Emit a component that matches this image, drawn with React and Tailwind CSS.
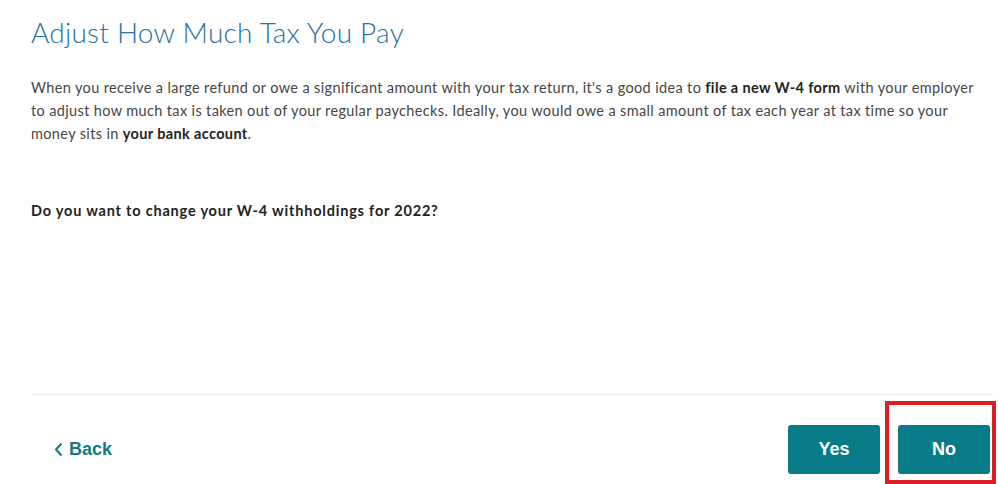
import React from "react";

function App() {
  return (
    <div className="w-[998px] h-[484px] bg-white overflow-hidden font-['Lato',sans-serif]">
      <div className="px-[31px] flex flex-col h-full">
        <h1 className="pt-[14px] text-[28px] leading-[36px] font-light text-[#2b70a6] tracking-[0.25px]">
          Adjust How Much Tax You Pay
        </h1>

        <p className="mt-[26px] text-[14.5px] leading-[23px] text-[#454545] tracking-[0.36px]">
          <span className="block whitespace-nowrap">
            When you receive a large refund or owe a significant amount with your tax return, it's a good idea to{" "}
            <b className="font-bold text-[#222]">file a new W-4 form</b> with your employer
          </span>
          <span className="block whitespace-nowrap">
            to adjust how much tax is taken out of your regular paychecks. Ideally, you would owe a small amount of tax each year at tax time so your
          </span>
          <span className="block whitespace-nowrap">
            money sits in <b className="font-bold text-[#222]">your bank account</b>.
          </span>
        </p>

        <p className="mt-[54px] text-[14.5px] leading-[23px] font-bold text-[#222] tracking-[0.8px]">
          Do you want to change your W-4 withholdings for 2022?
        </p>

        <div className="mt-auto border-t border-[#ececec] mr-[-24px]" />

        <div className="flex items-center justify-between h-[89px] pt-[20px] mr-[-23px]">
          <button className="flex items-center gap-[6px] pl-[23px] text-[18px] font-bold text-[#0f7b88] font-['Liberation_Sans',sans-serif]">
            <svg width="9" height="15" viewBox="0 0 9 15" fill="none">
              <path d="M7.5 1.5L2 7.5L7.5 13.5" stroke="#0f7b88" strokeWidth="2" />
            </svg>
            Back
          </button>

          <div className="flex items-center gap-[18px]">
            <button className="w-[92px] h-[49px] rounded-[3px] bg-[#077c88] text-white text-[18px] font-bold font-['Liberation_Sans',sans-serif]">
              Yes
            </button>
            <div className="relative">
              <button className="w-[92px] h-[49px] rounded-[3px] bg-[#077c88] text-white text-[18px] font-bold font-['Liberation_Sans',sans-serif]">
                No
              </button>
              <div className="absolute left-[-13px] top-[-24px] w-[111px] h-[83px] border-[4px] border-[#dc1f26] pointer-events-none" />
            </div>
          </div>
        </div>
      </div>
    </div>
  );
}

export default App;
